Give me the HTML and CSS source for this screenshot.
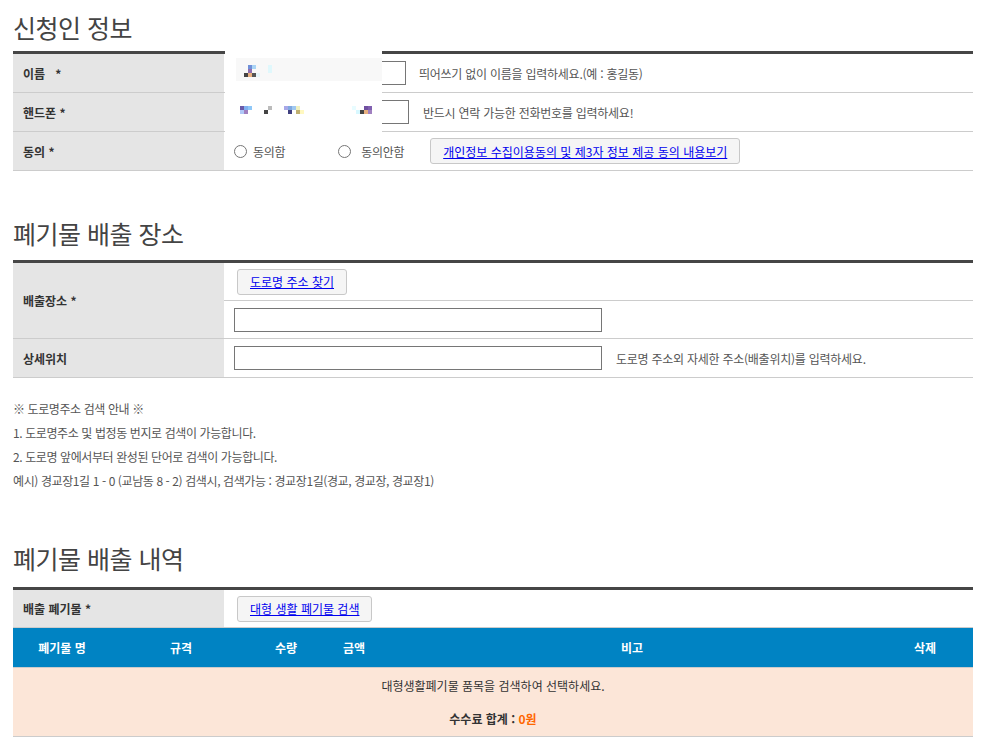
FILE: index.html
```html
<!DOCTYPE html>
<html lang="ko">

<head>
    <meta charset="UTF-8">
    <meta name="viewport" content="width=device-width, initial-scale=1.0">
    <title>대형폐기물 배출 신청</title>
    <link rel="stylesheet" href="styles.css">
</head>

<body>
    <div class="container">
        <h2 class="sec-title first">신청인 정보</h2>
        <div class="applicant">
            <table class="form-table">
                <tr>
                    <th>이름 &nbsp; *</th>
                    <td>
                        <input type="text" class="inp-name">
                        <span class="hint">띄어쓰기 없이 이름을 입력하세요.(예 : 홍길동)</span>
                    </td>
                </tr>
                <tr>
                    <th>핸드폰 *</th>
                    <td>
                        <input type="text" class="inp-phone">
                        <span class="hint hint-phone">반드시 연락 가능한 전화번호를 입력하세요!</span>
                    </td>
                </tr>
                <tr>
                    <th>동의 *</th>
                    <td>
                        <label class="radio"><input type="radio" name="agree"> 동의함</label>
                        <label class="radio radio-no"><input type="radio" name="agree"> 동의안함</label>
                        <button type="button" class="btn btn-agree">개인정보 수집이용동의 및 제3자 정보 제공 동의 내용보기</button>
                    </td>
                </tr>
            </table>

            <svg class="mask" width="157" height="86" viewBox="0 0 157 86">
                <rect x="0" y="0" width="157" height="86" fill="#fff" />
                <rect x="11" y="12" width="146" height="23" fill="#f8f8f8" />
                <rect x="23" y="19" width="4" height="4" fill="#6f8fd8" />
                <rect x="27" y="19" width="4" height="4" fill="#aad4f5" />
                <rect x="23" y="23" width="4" height="4" fill="#8f6fb0" />
                <rect x="19" y="27" width="4" height="4" fill="#444" />
                <rect x="23" y="27" width="4" height="4" fill="#e8b080" />
                <rect x="27" y="27" width="4" height="4" fill="#555" />
                <rect x="31" y="27" width="4" height="4" fill="#e6f4f8" />
                <rect x="43" y="19" width="4" height="8" fill="#e0f8fc" />

                <rect x="15" y="60" width="4" height="4" fill="#6a5aa8" />
                <rect x="19" y="60" width="4" height="4" fill="#7fb0f0" />
                <rect x="23" y="60" width="4" height="4" fill="#8fc8f8" />
                <rect x="15" y="64" width="4" height="4" fill="#b0c8f8" />
                <rect x="19" y="64" width="4" height="4" fill="#a080c0" />
                <rect x="39" y="64" width="4" height="4" fill="#444" />
                <rect x="43" y="60" width="4" height="4" fill="#bbb" />
                <rect x="59" y="60" width="4" height="4" fill="#a8a8e8" />
                <rect x="63" y="60" width="4" height="4" fill="#80a8e0" />
                <rect x="67" y="60" width="4" height="4" fill="#a0c8f0" />
                <rect x="71" y="60" width="4" height="4" fill="#f0f0c0" />
                <rect x="63" y="64" width="4" height="4" fill="#404080" />
                <rect x="71" y="64" width="4" height="4" fill="#c0b070" />
                <rect x="75" y="64" width="4" height="4" fill="#fff8c0" />
                <rect x="127" y="60" width="4" height="4" fill="#e8fcff" />
                <rect x="131" y="64" width="4" height="4" fill="#d8f8ff" />
                <rect x="135" y="64" width="4" height="4" fill="#444" />
                <rect x="139" y="60" width="4" height="4" fill="#7050a0" />
                <rect x="139" y="64" width="4" height="4" fill="#e8b080" />
                <rect x="143" y="60" width="4" height="4" fill="#8060b0" />
                <rect x="143" y="64" width="4" height="4" fill="#a080c0" />
            </svg>
        </div>

        <h2 class="sec-title second">폐기물 배출 장소</h2>
        <table class="form-table place">
            <tr>
                <th rowspan="2">배출장소 *</th>
                <td><button type="button" class="btn btn-find">도로명 주소 찾기</button></td>
            </tr>
            <tr>
                <td><input type="text" class="inp-wide"></td>
            </tr>
            <tr>
                <th>상세위치</th>
                <td>
                    <input type="text" class="inp-wide">
                    <span class="hint hint-detail">도로명 주소외 자세한 주소(배출위치)를 입력하세요.</span>
                </td>
            </tr>
        </table>

        <div class="guide">
            <p>※ 도로명주소 검색 안내 ※</p>
            <p>1. 도로명주소 및 법정동 번지로 검색이 가능합니다.</p>
            <p>2. 도로명 앞에서부터 완성된 단어로 검색이 가능합니다.</p>
            <p>예시) 경교장1길 1 - 0 (교남동 8 - 2) 검색시, 검색가능 : 경교장1길(경교, 경교장, 경교장1)</p>
        </div>

        <h2 class="sec-title third">폐기물 배출 내역</h2>
        <table class="form-table waste">
            <tr>
                <th>배출 폐기물 *</th>
                <td><button type="button" class="btn btn-find">대형 생활 폐기물 검색</button></td>
            </tr>
        </table>
        <table class="list-table">
            <thead>
                <tr>
                    <th class="c-name">폐기물 명</th>
                    <th class="c-spec">규격</th>
                    <th class="c-qty">수량</th>
                    <th class="c-price">금액</th>
                    <th class="c-note">비고</th>
                    <th class="c-del">삭제</th>
                </tr>
            </thead>
            <tbody>
                <tr class="empty">
                    <td colspan="6">
                        <p>대형생활폐기물 품목을 검색하여 선택하세요.</p>
                        <p class="total">수수료 합계 : <em>0원</em></p>
                    </td>
                </tr>
            </tbody>
        </table>
    </div>
</body>

</html>
```

FILE: styles.css
```css
body {
    margin: 0;
    padding: 0;
    background-color: #fff;
    font-family: "Noto Sans CJK KR", "Noto Sans", sans-serif;
    font-size: 12px;
    color: #333;
}

.container {
    width: 960px;
    padding-left: 13px;
}

/* Section titles */
.sec-title {
    margin: 0;
    font-size: 25px;
    font-weight: 400;
    line-height: 40px;
    color: #444;
    letter-spacing: -0.5px;
}

.sec-title.first {
    margin-top: 7px;
    margin-bottom: 4px;
}

.sec-title.second {
    margin-top: 42px;
    margin-bottom: 7px;
}

.sec-title.third {
    margin-top: 45px;
    margin-bottom: 9px;
}

/* Form tables */
.applicant {
    position: relative;
}

.mask {
    position: absolute;
    left: 212px;
    top: -5px;
    display: block;
}

.form-table {
    width: 960px;
    border-collapse: collapse;
    border-top: 3px solid #464646;
}

.form-table th {
    width: 201px;
    padding: 0 0 0 10px;
    background-color: #e5e5e5;
    text-align: left;
    font-weight: 700;
    color: #333;
    border-bottom: 1px solid #ccc;
    height: 38px;
}

.form-table td {
    padding: 0 0 0 10px;
    border-bottom: 1px solid #ccc;
    height: 37px;
    font-size: 0;
}

.form-table td > * {
    vertical-align: middle;
    font-size: 12px;
}

input[type="text"] {
    box-sizing: border-box;
    height: 24px;
    border: 1px solid #767676;
    margin: 0;
    padding: 0 4px;
    font-family: inherit;
}

.inp-name {
    width: 172px;
}

.inp-phone {
    width: 175px;
}

.inp-wide {
    width: 368px;
}

.hint {
    margin-left: 13px;
    color: #555;
    letter-spacing: -0.25px;
}

.hint-phone {
    margin-left: 14px;
}

.hint-detail {
    margin-left: 14px;
}

.radio {
    display: inline-flex;
    align-items: center;
    color: #555;
    letter-spacing: -0.3px;
}

.radio input {
    width: 13px;
    height: 13px;
    margin: 0 6px 0 0;
}

.radio-no {
    margin-left: 53px;
}

.radio-no input {
    margin-right: 10px;
}

.btn {
    box-sizing: border-box;
    height: 26px;
    padding: 0 12px;
    background-color: #f5f5f5;
    border: 1px solid #c8c8c8;
    border-radius: 3px;
    color: #0000ee;
    text-decoration: underline;
    font-family: inherit;
    font-weight: 400;
    cursor: pointer;
}

.btn-agree {
    margin-left: 26px;
}

.btn-find {
    margin-left: 3px;
}

.place th {
    height: 38px;
}

.place td {
    height: 37px;
}

/* Guide text */
.guide {
    margin-top: 19px;
    color: #555;
    font-size: 12px;
    letter-spacing: -0.4px;
}

.guide p {
    margin: 0;
    line-height: 24px;
}

/* Waste list */
.waste th,
.waste td {
    height: 37px;
}

.list-table {
    width: 960px;
    border-collapse: collapse;
    table-layout: fixed;
}

.list-table th {
    height: 39px;
    padding: 0;
    background-color: #0083c3;
    color: #fff;
    font-weight: 700;
    border-bottom: 1px solid #ccc;
}

.c-name { width: 98px; }
.c-spec { width: 140px; }
.c-qty { width: 70px; }
.c-price { width: 66px; }
.c-del { width: 96px; }

.empty td {
    background-color: #fce6d8;
    border-bottom: 1px solid #ccc;
    text-align: center;
    padding: 8px 0 7px;
}

.empty p {
    margin: 0;
    line-height: 20px;
}

.empty .total {
    margin-top: 13px;
    font-weight: 700;
}

.total em {
    font-style: normal;
    color: #ff6600;
}
```
